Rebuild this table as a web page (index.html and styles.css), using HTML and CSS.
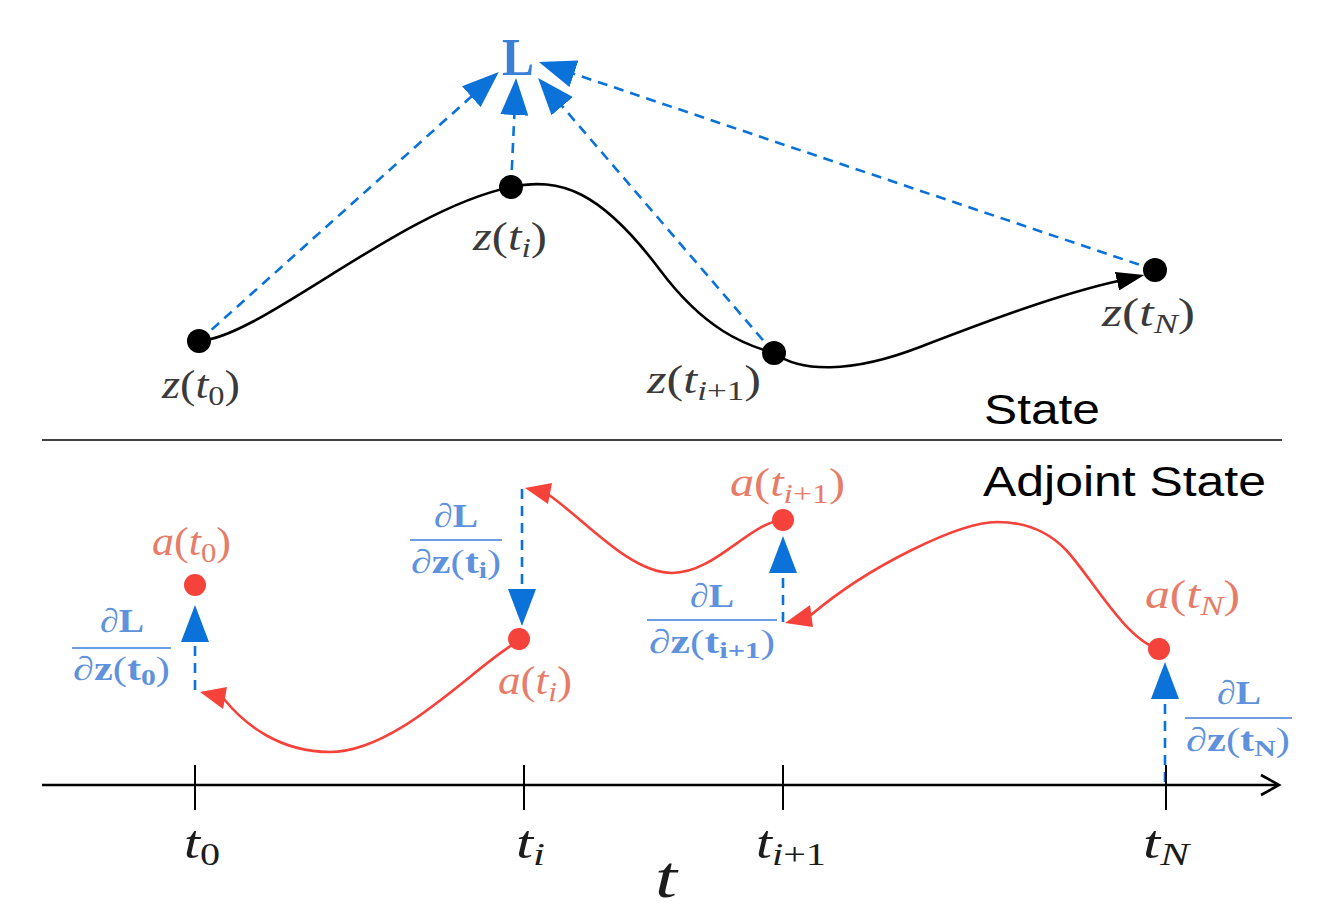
FILE: index.html
```html
<!DOCTYPE html>
<html>
<head>
<meta charset="utf-8">
<link rel="stylesheet" href="styles.css">
</head>
<body>
<svg class="canvas" width="1324" height="910" viewBox="0 0 1324 910" xmlns="http://www.w3.org/2000/svg">
  <defs>
    <marker id="ah-blue" markerUnits="userSpaceOnUse" markerWidth="37" markerHeight="28" refX="1" refY="14" orient="auto">
      <path class="head-blue" d="M0,0 L37,14 L0,28 Z"/>
    </marker>
    <marker id="ah-black" markerUnits="userSpaceOnUse" markerWidth="28" markerHeight="19" refX="1" refY="9.5" orient="auto">
      <path class="head-black" d="M0,0 L28,9.5 L0,19 Z"/>
    </marker>
  </defs>

  <!-- STATE -->
  <path class="curve-black" d="M199,341 C260,338 400,210 511,187 C560,177 600,190 660,270 C705,330 745,345 774,353"/>
  <path class="curve-black" marker-end="url(#ah-black)" d="M774,353 C800,372 850,374 920,347 C990,320 1060,294 1118,281"/>

  <line class="dash-blue" marker-end="url(#ah-blue)" x1="199" y1="341" x2="472" y2="96"/>
  <line class="dash-blue" marker-end="url(#ah-blue)" x1="511" y1="187" x2="514.4" y2="114"/>
  <line class="dash-blue" marker-end="url(#ah-blue)" x1="774" y1="353" x2="561.5" y2="105.4"/>
  <line class="dash-blue" marker-end="url(#ah-blue)" x1="1155" y1="270" x2="573" y2="73.5"/>

  <circle class="dot-black" cx="199" cy="341" r="12"/>
  <circle class="dot-black" cx="511" cy="187" r="12"/>
  <circle class="dot-black" cx="774" cy="353" r="12"/>
  <circle class="dot-black" cx="1155" cy="270" r="12"/>

  <text class="loss" x="502" y="75" textLength="32" lengthAdjust="spacingAndGlyphs">L</text>

  <text class="lbl-z" x="162" y="398" textLength="78" lengthAdjust="spacingAndGlyphs"><tspan class="it">z</tspan>(<tspan class="it">t</tspan><tspan class="sub" dy="7">0</tspan><tspan dy="-7">)</tspan></text>
  <text class="lbl-z" x="473" y="250" textLength="74" lengthAdjust="spacingAndGlyphs"><tspan class="it">z</tspan>(<tspan class="it">t</tspan><tspan class="sub it" dy="7">i</tspan><tspan dy="-7">)</tspan></text>
  <text class="lbl-z" x="647" y="393" textLength="114" lengthAdjust="spacingAndGlyphs"><tspan class="it">z</tspan>(<tspan class="it">t</tspan><tspan class="sub" dy="7"><tspan class="it">i</tspan>+1</tspan><tspan dy="-7">)</tspan></text>
  <text class="lbl-z" x="1102" y="326" textLength="93" lengthAdjust="spacingAndGlyphs"><tspan class="it">z</tspan>(<tspan class="it">t</tspan><tspan class="sub it" dy="7">N</tspan><tspan dy="-7">)</tspan></text>

  <text class="section" x="984" y="424" textLength="116" lengthAdjust="spacingAndGlyphs">State</text>
  <line class="divider" x1="42" y1="440" x2="1282" y2="440"/>
  <text class="section" x="983" y="496" textLength="283" lengthAdjust="spacingAndGlyphs">Adjoint State</text>

  <!-- ADJOINT -->
  <path class="curve-red" d="M519,641 C480,660 400,752 330,752 C280,752 245,725 224,699"/>
  <polygon class="head-red" points="200,692 227,687 223,709"/>
  <path class="curve-red" d="M783,520 C750,522 715,573 672,573 C630,573 585,520 549,495"/>
  <polygon class="head-red" points="525,488 552,483 548,504"/>
  <path class="curve-red" d="M1159,649 C1125,640 1090,575 1066,550 C1045,528 1020,522 997,522 C960,522 870,565 811,615"/>
  <polygon class="head-red" points="785,623 810,605 813,627"/>

  <line class="dash-blue" marker-end="url(#ah-blue)" x1="195" y1="690" x2="195" y2="641"/>
  <line class="dash-blue" marker-end="url(#ah-blue)" x1="522" y1="489" x2="522" y2="590"/>
  <line class="dash-blue" marker-end="url(#ah-blue)" x1="783" y1="622" x2="783" y2="572"/>
  <line class="dash-blue" marker-end="url(#ah-blue)" x1="1165" y1="782" x2="1165" y2="698"/>

  <circle class="dot-red" cx="195" cy="585" r="11"/>
  <circle class="dot-red" cx="519" cy="639" r="11"/>
  <circle class="dot-red" cx="783" cy="520" r="11"/>
  <circle class="dot-red" cx="1159" cy="649" r="11"/>

  <text class="lbl-a" x="152" y="555" textLength="79" lengthAdjust="spacingAndGlyphs"><tspan class="it">a</tspan>(<tspan class="it">t</tspan><tspan class="sub" dy="7">0</tspan><tspan dy="-7">)</tspan></text>
  <text class="lbl-a" x="498" y="694" textLength="74" lengthAdjust="spacingAndGlyphs"><tspan class="it">a</tspan>(<tspan class="it">t</tspan><tspan class="sub it" dy="7">i</tspan><tspan dy="-7">)</tspan></text>
  <text class="lbl-a" x="730" y="496" textLength="115" lengthAdjust="spacingAndGlyphs"><tspan class="it">a</tspan>(<tspan class="it">t</tspan><tspan class="sub" dy="7"><tspan class="it">i</tspan>+1</tspan><tspan dy="-7">)</tspan></text>
  <text class="lbl-a" x="1145" y="608" textLength="95" lengthAdjust="spacingAndGlyphs"><tspan class="it">a</tspan>(<tspan class="it">t</tspan><tspan class="sub it" dy="7">N</tspan><tspan dy="-7">)</tspan></text>

  <!-- gradient fractions -->
  <text class="frac" x="100" y="632" textLength="44" lengthAdjust="spacingAndGlyphs">∂<tspan class="bf">L</tspan></text>
  <line class="frac-rule" x1="72" y1="648" x2="171" y2="648"/>
  <text class="frac" x="73" y="680" textLength="97" lengthAdjust="spacingAndGlyphs">∂<tspan class="bf">z</tspan>(<tspan class="bf">t</tspan><tspan class="sub bf" dy="5">0</tspan><tspan dy="-5">)</tspan></text>

  <text class="frac" x="434" y="527" textLength="44" lengthAdjust="spacingAndGlyphs">∂<tspan class="bf">L</tspan></text>
  <line class="frac-rule" x1="410" y1="540" x2="502" y2="540"/>
  <text class="frac" x="411" y="573" textLength="90" lengthAdjust="spacingAndGlyphs">∂<tspan class="bf">z</tspan>(<tspan class="bf">t</tspan><tspan class="sub bf" dy="5">i</tspan><tspan dy="-5">)</tspan></text>

  <text class="frac" x="690" y="607" textLength="44" lengthAdjust="spacingAndGlyphs">∂<tspan class="bf">L</tspan></text>
  <line class="frac-rule" x1="647" y1="620" x2="777" y2="620"/>
  <text class="frac" x="649" y="653" textLength="126" lengthAdjust="spacingAndGlyphs">∂<tspan class="bf">z</tspan>(<tspan class="bf">t</tspan><tspan class="sub bf" dy="5">i+1</tspan><tspan dy="-5">)</tspan></text>

  <text class="frac" x="1217" y="704" textLength="44" lengthAdjust="spacingAndGlyphs">∂<tspan class="bf">L</tspan></text>
  <line class="frac-rule" x1="1185" y1="718" x2="1292" y2="718"/>
  <text class="frac" x="1186" y="751" textLength="104" lengthAdjust="spacingAndGlyphs">∂<tspan class="bf">z</tspan>(<tspan class="bf">t</tspan><tspan class="sub bf" dy="5">N</tspan><tspan dy="-5">)</tspan></text>

  <!-- time axis -->
  <line class="axis" x1="42" y1="785" x2="1278" y2="785"/>
  <path class="axis-head" d="M1261,775 L1279,785 L1261,795"/>
  <line class="tick" x1="195" y1="765" x2="195" y2="810"/>
  <line class="tick" x1="524" y1="765" x2="524" y2="810"/>
  <line class="tick" x1="783" y1="765" x2="783" y2="810"/>
  <line class="tick" x1="1166" y1="765" x2="1166" y2="810"/>

  <text class="lbl-t" x="184" y="858" textLength="36" lengthAdjust="spacingAndGlyphs"><tspan class="it">t</tspan><tspan class="sub" dy="7">0</tspan></text>
  <text class="lbl-t" x="516" y="858" textLength="29" lengthAdjust="spacingAndGlyphs"><tspan class="it">t</tspan><tspan class="sub it" dy="7">i</tspan></text>
  <text class="lbl-t" x="756" y="858" textLength="70" lengthAdjust="spacingAndGlyphs"><tspan class="it">t</tspan><tspan class="sub" dy="7"><tspan class="it">i</tspan>+1</tspan></text>
  <text class="lbl-t" x="1143" y="858" textLength="46" lengthAdjust="spacingAndGlyphs"><tspan class="it">t</tspan><tspan class="sub it" dy="7">N</tspan></text>
  <text class="lbl-tbig" x="655" y="897" textLength="22" lengthAdjust="spacingAndGlyphs">t</text>
</svg>
</body>
</html>
```

FILE: styles.css
```css
html, body {
  margin: 0;
  padding: 0;
  background: #ffffff;
}

.canvas {
  display: block;
  width: 1324px;
  height: 910px;
  background: #ffffff;
}

.curve-black {
  fill: none;
  stroke: #000000;
  stroke-width: 2.6;
  stroke-linecap: round;
}

.curve-red {
  fill: none;
  stroke: #f5423a;
  stroke-width: 2.6;
  stroke-linecap: round;
}

.dash-blue {
  fill: none;
  stroke: #0a72d8;
  stroke-width: 2.6;
  stroke-dasharray: 10 7;
}

.head-blue {
  fill: #0a72d8;
  stroke: none;
}

.head-red {
  fill: #f5423a;
  stroke: none;
}

.head-black {
  fill: #000000;
  stroke: none;
}

.dot-black {
  fill: #000000;
}

.dot-red {
  fill: #f5423a;
}

.divider {
  stroke: #000000;
  stroke-width: 1.4;
}

.axis {
  stroke: #000000;
  stroke-width: 2.6;
}

.axis-head {
  fill: none;
  stroke: #000000;
  stroke-width: 2.6;
  stroke-linejoin: miter;
}

.tick {
  stroke: #000000;
  stroke-width: 2;
}

.loss {
  font-family: "Liberation Serif", "DejaVu Serif", serif;
  font-weight: bold;
  font-size: 52px;
  fill: #3c80d6;
}

.section {
  font-family: "Liberation Sans", Arial, sans-serif;
  font-size: 42px;
  fill: #000000;
}

.lbl-z,
.lbl-a,
.lbl-t,
.lbl-tbig,
.frac {
  font-family: "Liberation Serif", "DejaVu Serif", serif;
}

.lbl-z {
  font-size: 40px;
  fill: #3a3a3a;
}

.lbl-a {
  font-size: 40px;
  fill: #e77c68;
}

.lbl-t {
  font-size: 46px;
  fill: #1c1c1c;
}

.lbl-tbig {
  font-size: 60px;
  font-style: italic;
  fill: #1c1c1c;
}

.frac {
  font-size: 34px;
  fill: #5f92dd;
}

.frac-rule {
  stroke: #6e9de2;
  stroke-width: 2;
}

.it {
  font-style: italic;
}

.bf {
  font-weight: bold;
}

.sub {
  font-size: 0.7em;
}
```
